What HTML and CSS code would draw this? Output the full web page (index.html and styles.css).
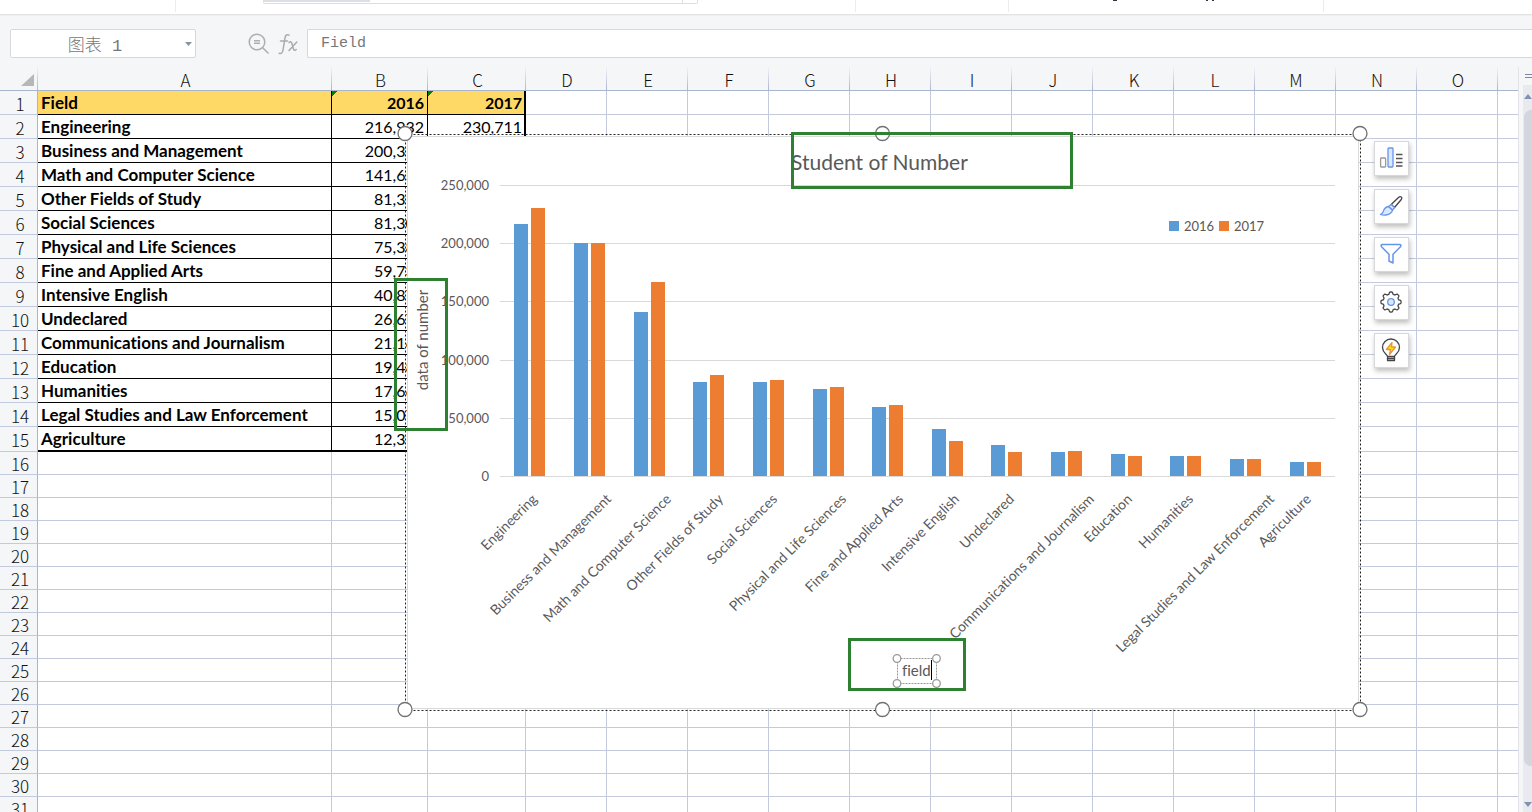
FILE: index.html
```
<!DOCTYPE html>
<html lang="zh-CN">
<head>
<meta charset="utf-8">
<title>Spreadsheet</title>
<link rel="stylesheet" href="styles.css">
</head>
<body>
<div class="app">
  <header class="ribbon">
    <div class="ribbon-group group-a"></div>
    <div class="ribbon-group group-b"><div class="ribbon-gallery"><span class="gallery-active"></span><span class="gallery-more"></span></div></div>
    <div class="ribbon-group group-c"></div>
    <div class="ribbon-group group-d"><i class="tail tail-g"></i><i class="tail tail-p"></i><i class="tail tail-q"></i></div>
  </header>

  <div class="formula-bar">
    <div class="name-box">
      <input class="name-input" type="text" value="图表 1" aria-label="Name box">
      <button class="name-drop" aria-label="Open names"><svg width="7" height="4" viewBox="0 0 7 4"><path d="M0 0h7L3.500 4z" fill="#8a93a6"/></svg></button>
    </div>
    <div class="formula-tools">
      <button class="tool" aria-label="Look up"><svg width="22" height="22" viewBox="0 0 22 22" fill="none" stroke="#aeaeae" stroke-width="1.500"><circle cx="9" cy="9" r="7.800"/><path d="M14.500 14.500l6 6M6 7.700h6M6 10.300h6"/></svg></button>
      <button class="tool" aria-label="Insert function"><svg width="20" height="22" viewBox="0 0 20 22" fill="none" stroke="#aaa" stroke-width="1.500" stroke-linecap="round"><path d="M11 2.200C8.500.800 7.400 2.500 7 5L5 17c-.500 3-1.700 4-3.800 3.200M2.500 8h7M11 9.500c1.300-1.300 2.300-1 2.800.700l1.600 5.600c.500 1.800 1.500 2 2.800.700M18.800 9L11 17.500"/></svg></button>
    </div>
    <input class="formula-input" type="text" value="Field" aria-label="Formula">
  </div>

  <main class="workspace">
    <div class="sheet">
      <table class="grid">
        <colgroup>
          <col class="col-num"><col class="col-a"><col class="col-b"><col class="col-c">
          <col class="col-std"><col class="col-std"><col class="col-std"><col class="col-std"><col class="col-std"><col class="col-std"><col class="col-std"><col class="col-std"><col class="col-std"><col class="col-std"><col class="col-std"><col class="col-std"><col>
        </colgroup>
        <thead><tr id="letters"></tr></thead>
        <tbody id="rows"></tbody>
      </table>

      <svg class="chart" width="980" height="600" viewBox="390 125 980 600" role="img" aria-label="Student of Number">
        <rect x="407.500" y="136.500" width="951" height="572" fill="#fff" stroke="#d9d9d9"/>
        <g id="plot"></g>
        <text class="chart-title" x="791" y="170">Student of Number</text>
        <rect x="1169" y="221" width="10" height="10" fill="#5b9bd5"/>
        <text class="chart-label" x="1184" y="231">2016</text>
        <rect x="1219" y="221" width="10" height="10" fill="#ed7d31"/>
        <text class="chart-label" x="1234" y="231">2017</text>
        <text class="axis-title" text-anchor="middle" transform="translate(428 340) rotate(-90)">data of number</text>
        <text class="axis-title" x="902" y="676">field</text>
        <rect class="frame" x="405.500" y="134.500" width="955" height="576"/>
        <g class="handle">
          <circle cx="405" cy="133.500" r="7"/><circle cx="882.500" cy="133.500" r="7"/><circle cx="1360" cy="133.500" r="7"/>
          <circle cx="405" cy="709.500" r="7"/><circle cx="882.500" cy="709.500" r="7"/><circle cx="1360" cy="709.500" r="7"/>
        </g>
        <rect class="text-frame" x="897.500" y="658.500" width="39" height="25"/>
        <g class="handle small">
          <circle cx="897" cy="658.500" r="3.800"/><circle cx="936.500" cy="658.500" r="3.800"/><circle cx="897" cy="683.500" r="3.800"/><circle cx="936.500" cy="683.500" r="3.800"/>
        </g>
        <rect x="931" y="660" width="1" height="20" fill="#000"/>
        <g class="mark">
          <rect x="792.500" y="133.500" width="279" height="54"/>
          <rect x="395.500" y="279.500" width="51" height="150"/>
          <rect x="849.500" y="639.500" width="115" height="50"/>
        </g>
      </svg>

      <div class="chart-tools">
        <button aria-label="Chart elements"><svg viewBox="0 0 24 24" fill="none" stroke-width="1.300"><rect x="1.600" y="12" width="5" height="9" rx=".8" stroke="#999"/><rect x="9" y="2" width="5" height="19" rx=".8" fill="#dce8fc" stroke="#6495ed"/><path d="M17 8.500h6.500M17 12.500h6.500M17 16.500h6.500M17 20h6.500" stroke="#555"/></svg></button>
        <button aria-label="Chart style"><svg viewBox="0 0 24 24" fill="none" stroke-width="1.300" stroke-linejoin="round"><path d="M12.200 10.500L19.500 3.500c2-1.800 4.200-.200 2.800 2L15.500 13.500z" fill="#fff" stroke="#444"/><path d="M9.500 12.500l2.700-2 3.300 3-2 2.700z" fill="#dce8fc" stroke="#6495ed"/><path d="M9.500 12.500c-4 .500-4.500 3-5.500 5.500-.700 1.400-1.500 2-2.500 2.500 4 1.500 11 .500 12-4.300z" fill="#dce8fc" stroke="#6495ed"/></svg></button>
        <button aria-label="Chart filter"><svg viewBox="0 0 24 24" fill="none" stroke="#6495ed" stroke-width="1.500" stroke-linejoin="round"><path d="M3.500 2.500h17c1.500 0 1.800 1 1 2.200l-7.500 7.500v8.800l-4-2v-6.800L2.500 4.700c-.800-1.200-.500-2.200 1-2.200z"/></svg></button>
        <button aria-label="Chart settings"><svg viewBox="0 0 24 24" fill="none" stroke-width="1.300" stroke-linejoin="round"><path id="cog" stroke="#444"/><circle cx="12" cy="12" r="3.300" fill="#dce8fc" stroke="#6495ed"/></svg></button>
        <button aria-label="Chart ideas"><svg viewBox="0 0 24 24" fill="none" stroke="#444" stroke-width="1.300" stroke-linejoin="round"><path d="M8.500 18.500c0-2-5-3.500-5-9a8.500 8.500 0 0 1 17 0c0 5.500-5 7-5 9zM8.500 18.500v4h7v-4M8.500 20.500h7"/><path d="M13 4.500L7.500 11.500h4L10.500 16.500l6-7.500h-4z" fill="#ffe11a" stroke="#e8953a"/></svg></button>
      </div>
    </div>

    <aside class="scroll-side">
      <svg class="split" width="8" height="5" viewBox="0 0 8 5"><path d="M0 .5h8M0 3.500h8" stroke="#7b87a0"/></svg>
      <div class="scroll-track">
        <svg width="8" height="5" viewBox="0 0 8 5"><path d="M0 5l4-5 4 5z" fill="#8292b0"/></svg>
        <div class="scroll-thumb"></div>
        <svg width="8" height="5" viewBox="0 0 8 5"><path d="M0 0h8L4 5z" fill="#8292b0"/></svg>
      </div>
    </aside>
  </main>
</div>
<script src="script.js"></script>
</body>
</html>
```
FILE: styles.css
```
* { box-sizing: border-box; }
body {
  margin: 0;
  font-family: Lato, "Open Sans", sans-serif;
  font-variant-ligatures: none;
  color: #000;
  background: #f5f6f8;
}
button { padding: 0; border: 0; background: none; }
svg { display: block; }
.app { display: flex; flex-direction: column; height: 100vh; overflow: hidden; }

/* Ribbon edge */
.ribbon { display: flex; flex: none; height: 15px; background: #fff; border-bottom: 1px solid #e4e4e4; }
.ribbon-group { height: 12px; border-right: 1px solid #ececee; }
.group-a { width: 176px; }
.group-b { width: 680px; padding-left: 87px; }
.group-c { width: 153px; }
.group-d { display: flex; width: 315px; padding-left: 104px; }
.ribbon-gallery { display: flex; justify-content: space-between; width: 435px; height: 4px; border: 1px solid #dcdee2; border-top: 0; border-radius: 0 0 2px 2px; }
.gallery-active { width: 106px; height: 2px; background: #dcdfe4; }
.gallery-more { width: 15px; border-left: 1px solid #dcdee2; }
.tail { height: 1px; background: #334; }
.tail-g { width: 4px; }
.tail-p { width: 2px; margin-left: 89px; }
.tail-q { width: 2px; margin-left: 4px; }

/* Formula bar */
.formula-bar { display: flex; flex: none; align-items: center; height: 52px; padding: 4px 0 0 10px; border-top: 1px solid #eeeff1; }
.name-box { display: flex; align-items: center; width: 186px; height: 29px; background: #fff; border: 1px solid #d6d8dd; border-radius: 2px; }
.name-input, .formula-input {
  border: 0;
  outline: 0;
  min-width: 0;
  background: #fff;
  color: #777;
  font: 300 15px "Liberation Mono", "Noto Sans CJK SC", monospace;
}
.name-input { flex: 1; height: 27px; padding: 0 6px 0 0; font-size: 17px; text-align: center; }
.name-drop { width: 7px; margin-right: 3px; }
.formula-tools { display: flex; align-items: center; gap: 8px; width: 111px; padding-left: 52px; }
.formula-input { flex: 1; height: 29px; padding: 0 13px; border: 1px solid #d6d8dd; border-right: 0; border-radius: 2px 0 0 2px; }

/* Sheet */
.workspace { display: flex; flex: 1; min-height: 0; }
.sheet { position: relative; flex: 1; min-width: 0; overflow: hidden; }
.grid { width: 100%; table-layout: fixed; border-collapse: separate; border-spacing: 0; background: #fff; }
.col-num { width: 38px; }
.col-a { width: 294px; }
.col-b { width: 96px; }
.col-c { width: 98px; }
.col-std { width: 81px; }
.grid th, .grid td { padding: 0; border-right: 1px solid #c3cadd; border-bottom: 1px solid #c3cadd; overflow: hidden; white-space: nowrap; }
.grid th:last-child, .grid td:last-child { border-right: 0; }
.grid th { background: #f5f6f8; font: 300 17px/20px "Noto Sans CJK SC", sans-serif; color: #111; }
.grid thead th { height: 24px; padding: 3px 0 0 2px; border-bottom-color: #a9b4cd; border-image: linear-gradient(#f5f6f8, #a9b4cd) 1; }
.grid tbody th { padding: 2px 0 0 3px; border-right-color: #a9b4cd; }
.corner svg { margin-left: 19px; }
.grid tbody tr { height: 23px; }
.grid tbody tr.data { height: 24px; }
.grid tbody tr.data.last { height: 25px; }
.data td { font-size: 16px; line-height: 20px; }
.data .name, .data .num { border-color: #000; }
.data .name { padding-left: 3px; font-size: 17px; font-weight: 700; }
.data .num { padding-right: 3px; text-align: right; }
.data .edge { border-right-width: 2px; padding-right: 2px; }
.last .name, .last .num { border-bottom-width: 2px; }
.data .head { background: #ffd966; font-weight: 700; }
.data .flag { background: linear-gradient(135deg, #0a7d12 4px, #ffd966 4px); }

/* Chart lies over the cells */
.chart { position: absolute; left: 390px; top: 58px; }
.chart text { fill: #595959; }
.chart-title { font-size: 21px; }
.chart-label { font-size: 13px; }
.axis-title { font-size: 15px; }
.category { font-size: 14px; }
.gridline { stroke: #d9d9d9; }
.frame { fill: none; stroke: #222; stroke-dasharray: 2 2; }
.text-frame { fill: none; stroke: #999; stroke-dasharray: 2 1; }
.handle { fill: #fff; stroke: #707070; stroke-width: 1.3; }
.handle.small { stroke: #999; }
.mark { fill: none; stroke: #2f8132; stroke-width: 3; }

.chart-tools { position: absolute; left: 1374px; top: 74px; display: flex; flex-direction: column; gap: 13px; }
.chart-tools button { display: flex; align-items: center; justify-content: center; width: 35px; height: 35px; padding: 0 2px 2px 0; background: #fff; border: 1px solid #d8d8dc; box-shadow: 1px 3px 5px rgba(0, 0, 0, .25); }
.chart-tools svg { width: 24px; height: 24px; }

/* Scrollbar */
.scroll-side { display: flex; flex-direction: column; flex: none; width: 14px; padding-left: 4px; border-left: 1px solid #e2e4e9; }
.split { margin: 7px 0 6px 2px; }
.scroll-track { display: flex; flex: 1; flex-direction: column; align-items: flex-end; padding: 9px 0 5px; background: #e8eaef; }
.scroll-thumb { flex: 1; width: 8px; margin: 11px 0 36px; background: #d3d6df; border-radius: 7px 0 0 7px; }
```
FILE: script.js
```
const data = [
  ["Engineering", 216932, 230711, 538],
  ["Business and Management", 200312, 200754, 612],
  ["Math and Computer Science", 141651, 167180, 672],
  ["Other Fields of Study", 81318, 86800, 724],
  ["Social Sciences", 81304, 82600, 778],
  ["Physical and Life Sciences", 75385, 76800, 847],
  ["Fine and Applied Arts", 59736, 61500, 904],
  ["Intensive English", 40877, 30300, 960],
  ["Undeclared", 26675, 21100, 1015],
  ["Communications and Journalism", 21160, 21900, 1095],
  ["Education", 19483, 17900, 1133],
  ["Humanities", 17664, 17500, 1194],
  ["Legal Studies and Law Enforcement", 15077, 15300, 1275],
  ["Agriculture", 12318, 12600, 1312]
];
const format = (n) => n.toLocaleString("en-US");

// Column letters
const corner = '<th class="corner"><svg width="13" height="12" viewBox="0 0 13 12"><path d="M13 0v12H0z" fill="#b5b7ba"/></svg></th>';
document.getElementById("letters").innerHTML =
  corner + [..."ABCDEFGHIJKLMNO"].map((c) => `<th scope="col">${c}</th>`).join("") + "<th></th>";

// Rows: the data block, then empty cells
const blanks = (n) => "<td></td>".repeat(n);
let rows = `<tr class="data"><th scope="row">1</th><td class="name head">Field</td><td class="num head flag">2016</td><td class="num head flag edge">2017</td>${blanks(13)}</tr>`;
data.forEach(([name, a, b], i) => {
  const last = i === data.length - 1 ? " last" : "";
  rows += `<tr class="data${last}"><th scope="row">${i + 2}</th><td class="name">${name}</td><td class="num">${format(a)}</td><td class="num edge">${i === 0 ? format(b) : ""}</td>${blanks(13)}</tr>`;
});
for (let r = 16; r <= 31; r++) rows += `<tr><th scope="row">${r}</th>${blanks(16)}</tr>`;
document.getElementById("rows").innerHTML = rows;

// Plot: scale, bars and slanted category names
const base = 476, unit = 291 / 250000, step = 835 / 14;
let plot = "";
for (let v = 0; v <= 250000; v += 50000) {
  const y = Math.round(base - v * unit);
  plot += `<path class="gridline" d="M500 ${y + 0.5}H1335"/><text class="chart-label" text-anchor="end" x="489" y="${y + 5}">${format(v)}</text>`;
}
data.forEach(([name, a, b, end], i) => {
  const x = Math.round(514.3 + i * step);
  const bar = (left, v, color) => {
    const h = Math.floor(v * unit);
    return `<rect x="${left}" y="${base - h}" width="14" height="${h}" fill="${color}"/>`;
  };
  plot += bar(x, a, "#5b9bd5") + bar(x + 17, b, "#ed7d31");
  plot += `<text class="category" text-anchor="end" transform="translate(${end} 500) rotate(-45)">${name}</text>`;
});
document.getElementById("plot").innerHTML = plot;

// Cog outline with eight rounded teeth
let cog = "";
for (let i = 0; i < 96; i++) {
  const t = (i / 96) * 2 * Math.PI;
  const r = 9 + 1.1 * Math.tanh(2.500 * Math.cos(8 * t));
  cog += `${i ? "L" : "M"}${(12 + r * Math.cos(t)).toFixed(1)} ${(12 + r * Math.sin(t)).toFixed(1)}`;
}
document.getElementById("cog").setAttribute("d", cog + "z");
```
